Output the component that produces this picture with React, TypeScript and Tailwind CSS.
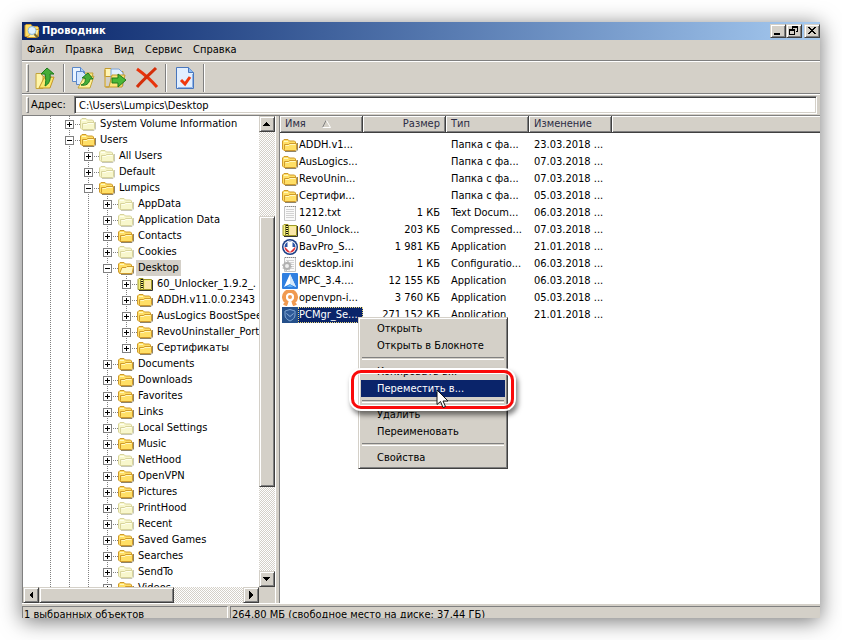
import { useState } from 'react';
import type { ReactNode } from 'react';

type TreeItem = {
  name: string;
  level: number;
  kind?: 'folder' | 'faded' | 'open' | 'zip';
  expanded?: boolean;
};

const tree: TreeItem[] = [
  { name: 'System Volume Information', level: 1, kind: 'faded' },
  { name: 'Users', level: 1, expanded: true },
  { name: 'All Users', level: 2, kind: 'faded' },
  { name: 'Default', level: 2, kind: 'faded' },
  { name: 'Lumpics', level: 2, expanded: true },
  { name: 'AppData', level: 3, kind: 'faded' },
  { name: 'Application Data', level: 3, kind: 'faded' },
  { name: 'Contacts', level: 3 },
  { name: 'Cookies', level: 3, kind: 'faded' },
  { name: 'Desktop', level: 3, kind: 'open', expanded: true },
  { name: '60_Unlocker_1.9.2_.', level: 4, kind: 'zip' },
  { name: 'ADDH.v11.0.0.2343', level: 4 },
  { name: 'AusLogics BoostSpee', level: 4 },
  { name: 'RevoUninstaller_Port', level: 4 },
  { name: 'Сертификаты', level: 4 },
  { name: 'Documents', level: 3 },
  { name: 'Downloads', level: 3 },
  { name: 'Favorites', level: 3 },
  { name: 'Links', level: 3 },
  { name: 'Local Settings', level: 3, kind: 'faded' },
  { name: 'Music', level: 3 },
  { name: 'NetHood', level: 3, kind: 'faded' },
  { name: 'OpenVPN', level: 3 },
  { name: 'Pictures', level: 3 },
  { name: 'PrintHood', level: 3, kind: 'faded' },
  { name: 'Recent', level: 3, kind: 'faded' },
  { name: 'Saved Games', level: 3 },
  { name: 'Searches', level: 3 },
  { name: 'SendTo', level: 3, kind: 'faded' },
  { name: 'Videos', level: 3 },
];

const files = [
  { icon: 'folder', name: 'ADDH.v1...', size: '', type: 'Папка с фа...', date: '23.03.2018 ...' },
  { icon: 'folder', name: 'AusLogics...', size: '', type: 'Папка с фа...', date: '07.03.2018 ...' },
  { icon: 'folder', name: 'RevoUnin...', size: '', type: 'Папка с фа...', date: '07.03.2018 ...' },
  { icon: 'folder', name: 'Сертифи...', size: '', type: 'Папка с фа...', date: '05.03.2018 ...' },
  { icon: 'txt', name: '1212.txt', size: '1 КБ', type: 'Text Docum...', date: '06.03.2018 ...' },
  { icon: 'zip', name: '60_Unlock...', size: '203 КБ', type: 'Compressed...', date: '07.03.2018 ...' },
  { icon: 'bav', name: 'BavPro_S...', size: '1 981 КБ', type: 'Application', date: '21.01.2018 ...' },
  { icon: 'ini', name: 'desktop.ini', size: '1 КБ', type: 'Configuratio...', date: '06.03.2018 ...' },
  { icon: 'mpc', name: 'MPC_3.4....', size: '12 155 КБ', type: 'Application', date: '06.03.2018 ...' },
  { icon: 'vpn', name: 'openvpn-i...', size: '3 760 КБ', type: 'Application', date: '05.03.2018 ...' },
  { icon: 'pcm', name: 'PCMgr_Se...', size: '271 152 КБ', type: 'Application', date: '21.01.2018 ...' },
];

const FolderIcon = ({ faded = false, open = false }: { faded?: boolean; open?: boolean }) => {
  const line = faded ? '#d8d49c' : '#cf9a2c';
  const body = faded ? '#f8f7cc' : '#ffdf66';
  const light = faded ? '#fffff0' : '#fff8c0';
  return (
    <svg width="16" height="16" viewBox="0 0 16 16" className="shrink-0">
      <path d="M3 14.500h11l1.500-1.500V6" fill="none" stroke={faded ? '#c8c8b8' : '#8f8468'} />
      <path d="M.500 12V4l1.500-1.500h4L7.500 4h5l1 1v7L12 13.500H2z" fill={body} stroke={line} />
      <path d="M2 4.500h4" stroke={light} />
      {open ? (
        <path d="M1.500 13.500 4 7.500h4l1-1h6.500l-1.500 7z" fill={light} stroke={line} />
      ) : (
        <>
          <path d="M2.500 7.500h4l1-1h7v6l-1 1h-10l-1-1z" fill={body} stroke={line} />
          <path d="M3.500 8.500H7l1-1h5.500" fill="none" stroke={light} />
        </>
      )}
    </svg>
  );
};

const SearchFolderIcon = () => (
  <svg width="16" height="16" viewBox="0 0 16 16" className="shrink-0">
    <path d="M1 13.500v-11l1-1h5l1.500 2h5l1 1v9z" fill="#ffdf66" stroke="#cf9a2c" />
    <path d="M11 6.500h4l-2 8H3z" fill="#fff0a0" stroke="#cf9a2c" />
    <circle cx="8" cy="7.500" r="4" fill="#dff1ff" stroke="#8db8da" />
    <path d="m10.500 11 3 3.500" stroke="#7a6a30" strokeWidth="2" />
  </svg>
);

const ZipIcon = () => (
  <svg width="16" height="16" viewBox="0 0 16 16" className="shrink-0">
    <path d="M1 13.500V3.500l1-1h4l1 1h7.500v10z" fill="#f5f084" stroke="#a09828" />
    <path d="M8 5h6v8H8z" fill="#fbe7a8" />
    <path d="M2 14.500h13.500V4" fill="none" stroke="#333" />
    <path d="M3.500 3v10M6.500 3v10" stroke="#8c8630" />
    <path d="M5 3v10" stroke="#111" strokeWidth="2" strokeDasharray="1 1" />
  </svg>
);

const FileIcon = ({ icon }: { icon: string }) => {
  if (icon === 'folder') return <FolderIcon />;
  if (icon === 'zip') return <ZipIcon />;
  return (
    <svg width="16" height="16" viewBox="0 0 16 16" className="shrink-0">
      {(icon === 'txt' || icon === 'ini') && (
        <>
          <path d="M2.500 1.500h11v14h-11z" fill="#fafafa" stroke="#c4c4c4" />
          <path d="M3 1.500h11" stroke="#888" strokeDasharray="1 1" />
          <path d="M4 4.500h8M4 6.500h8M4 8.500h8M4 10.500h8M4 12.500h8" stroke="#d2d2d2" />
        </>
      )}
      {icon === 'ini' && (
        <>
          <circle cx="5" cy="10" r="3" fill="#eee" stroke="#b0b0b0" strokeWidth="2" />
          <circle cx="5" cy="10" r="4.500" fill="none" stroke="#b0b0b0" strokeDasharray="1.500 2" />
        </>
      )}
      {icon === 'bav' && (
        <>
          <circle cx="8" cy="8" r="8" fill="#1c3f86" />
          <circle cx="8" cy="8" r="6.500" fill="#fff" />
          <path d="M8 2.500a5.500 5.500 0 0 0-5.500 5.500h11A5.500 5.500 0 0 0 8 2.500z" fill="#2a55a5" />
          <path d="M2.500 8a5.500 5.500 0 0 0 11 0z" fill="#dd3038" />
          <path d="M5.500 3h5v5H13l-5 5-5-5h2.500z" fill="#fff" />
        </>
      )}
      {icon === 'mpc' && (
        <>
          <rect width="16" height="16" rx="1" fill="#2f7fe0" />
          <path d="M8 1 2 14l6-3 6 3z" fill="#fff" />
          <path d="M8 1v10l6 3z" fill="#d3e8fc" />
          <path d="m8 11-3 3h6z" fill="#5fb0f5" />
        </>
      )}
      {icon === 'vpn' && (
        <>
          <path d="M3 15.500 4.500 12a6 6 0 1 1 7 0l1.500 3.500" fill="none" stroke="#f09a50" strokeWidth="4" />
          <circle cx="8" cy="7" r="3" fill="#f09a50" stroke="#fff" strokeWidth="2" />
          <path d="M7 9h2l1 7H6z" fill="#fff" />
        </>
      )}
      {icon === 'pcm' && (
        <>
          <rect width="16" height="16" fill="#25508a" />
          <path d="M8 2.500 13 4v4c0 3-2 4.500-5 6-3-1.500-5-3-5-6V4z" fill="#2e5a98" stroke="#7fa4d2" />
          <path d="m4.500 6.500 3.500 3 3.500-3" fill="none" stroke="#8fb1dc" />
        </>
      )}
    </svg>
  );
};

const bevel =
  'border border-t-[#d4d0c8] border-l-[#d4d0c8] border-r-[#404040] border-b-[#404040] bg-[#d4d0c8] shadow-[inset_1px_1px_#fff,inset_-1px_-1px_#808080]';
const checker = 'bg-[repeating-conic-gradient(#fff_0_25%,#d4d0c8_0_50%)] bg-[length:2px_2px]';

const CaptionButton = ({ label, children }: { label: string; children: ReactNode }) => (
  <button aria-label={label} className={`flex h-[14px] w-4 items-center justify-center ${bevel}`}>
    <svg width="10" height="10" viewBox="0 0 10 10" shapeRendering="crispEdges">
      {children}
    </svg>
  </button>
);

const ScrollButton = ({ label, d }: { label: string; d: string }) => (
  <button aria-label={label} className={`flex size-4 shrink-0 items-center justify-center ${bevel}`}>
    <svg width="8" height="8" viewBox="0 0 8 8" shapeRendering="crispEdges">
      <path d={d} />
    </svg>
  </button>
);

const ToolButton = ({ label, children }: { label: string; children: ReactNode }) => (
  <button aria-label={label} className="flex h-7 w-8 items-center justify-center">
    <svg width="24" height="24" viewBox="0 0 24 24" className="shrink-0">
      {children}
    </svg>
  </button>
);

const ToolSeparator = () => <div className="mx-[2px] h-7 w-[2px] border-l border-r border-l-[#808080] border-r-white" />;

const Gripper = ({ tall = false }: { tall?: boolean }) => (
  <div className={`w-[3px] border border-t-white border-l-white border-r-[#808080] border-b-[#808080] ${tall ? 'h-7' : 'h-4'}`} />
);

const Toolbar = () => (
  <div className="flex h-8 items-center border-b border-[#808080] pl-1">
    <Gripper tall />
    <ToolButton label="Вверх">
      <path d="M4 9h5l2 2h8l-2 10H5z" fill="#f2cf5b" stroke="#c4962a" />
      <path d="M3 7.500h5l2 3v12H3z" fill="#fff5a8" stroke="#c4a43a" />
      <path d="m11 12 10-1-4 11H6z" fill="#fbe76d" stroke="#c4962a" />
      <path d="M8 8 14 2l7 6h-4c1 6-1 10-5 12 1-4 1-7 0-12z" fill="#45ad38" stroke="#1f7a1c" />
    </ToolButton>
    <ToolSeparator />
    <ToolButton label="Копировать в">
      <path d="M13 7h9l-3 13H9z" fill="#f9e37a" stroke="#c4a43a" />
      <path d="M1.500 1.500h8l4 4v10h-12z" fill="#eaf4ff" stroke="#5a87c8" />
      <path d="M9.500 1.500v4h4" fill="#a9cdf5" stroke="#5a87c8" />
      <path d="M5.500 5.500h6l4 4v9h-10z" fill="#d3e7ff" stroke="#5a87c8" />
      <path d="m12 13 11-3-4 12H7z" fill="#fff39a" stroke="#c4a43a" />
      <path d="m11 12 6-5 5 6h-3c-1 5-4 7-9 6 3-1 5-3 4-7z" fill="#45ad38" stroke="#1f7a1c" />
    </ToolButton>
    <ToolButton label="Переместить в">
      <path d="M2 2.500h6l2 3h10v5H2z" fill="#fff5b5" stroke="#c49a2c" />
      <path d="M8 3h8l4 4v13H8z" fill="#e1efff" stroke="#7ea3d3" />
      <path d="M2 4v17h4l3-12h13l-3 12H3" fill="#fbe57b" stroke="#c49a2c" />
      <path d="M9 12h6V8l8 6-8 7v-4H9z" fill="#49b837" stroke="#1f7a1c" />
    </ToolButton>
    <ToolButton label="Удалить">
      <path d="M2 3c7 5 14 11 20 18" fill="none" stroke="#e8340c" strokeWidth="3" />
      <path d="M21 2C15 8 8 14 2 21" fill="none" stroke="#d42f0a" strokeWidth="3" />
    </ToolButton>
    <ToolSeparator />
    <ToolButton label="Свойства">
      <path d="M3.500 1.500h12l5 5v16h-17z" fill="#e2efff" stroke="#4876bd" />
      <path d="M15.500 1.500v5h5" fill="#8ebcf2" stroke="#4876bd" />
      <path d="M5 21.500h14.500V8" fill="none" stroke="#8fb4e8" />
      <path d="m8 14 4 4 5-7" fill="none" stroke="#f0380e" strokeWidth="3" />
    </ToolButton>
    <ToolSeparator />
  </div>
);

const TreeRow = ({ item, lastChild }: { item: TreeItem; lastChild: boolean }) => {
  const [expanded, setExpanded] = useState(!!item.expanded);
  return (
    <li className="flex h-4 items-center whitespace-nowrap">
      {Array.from({ length: item.level }, (_, i) => (
        <span key={i} className="flex h-4 w-[19px] shrink-0 justify-center">
          <span className="h-4 w-px bg-[repeating-linear-gradient(#808080_0_1px,#fff_1px_2px)]" />
        </span>
      ))}
      <span className="relative flex h-4 w-[20px] shrink-0 items-center pl-[5px]">
        <span
          className={`absolute top-0 left-[9px] w-px bg-[repeating-linear-gradient(#808080_0_1px,#fff_1px_2px)] ${lastChild ? 'h-2' : 'h-4'}`}
        />
        <button
          aria-label={item.name}
          aria-expanded={expanded}
          onClick={() => setExpanded(!expanded)}
          className="relative size-[9px] border border-[#808080] bg-white"
        >
          <svg width="7" height="7" viewBox="0 0 7 7" stroke="#000" className="block" shapeRendering="crispEdges">
            <path d={expanded ? 'M1 3.500h5' : 'M1 3.500h5M3.500 1v5'} />
          </svg>
        </button>
        <span className="h-px w-[6px] bg-[repeating-linear-gradient(90deg,#fff_0_1px,#808080_1px_2px)]" />
      </span>
      {item.kind === 'zip' ? <ZipIcon /> : <FolderIcon faded={item.kind === 'faded'} open={item.kind === 'open'} />}
      <span className={`ml-[2px] h-4 px-[2px] leading-4 ${item.kind === 'open' ? 'bg-[#d4d0c8]' : ''}`}>{item.name}</span>
    </li>
  );
};

const TreePane = () => (
  <aside className="flex w-[253px] shrink-0 flex-col border-l border-[#808080] bg-white">
    <div className="flex min-h-0 flex-1">
      <ul className="min-w-0 flex-1 overflow-hidden pl-[18px]">
        {tree.map((item) => (
          <TreeRow key={item.name} item={item} lastChild={item.name === 'Сертификаты'} />
        ))}
      </ul>
      <div className={`flex w-4 flex-col ${checker}`}>
        <ScrollButton label="Вверх" d="M0 6h7L3.500 2z" />
        <div className="flex-[84]" />
        <div className={`flex-[271] ${bevel}`} />
        <div className="flex-[84]" />
        <ScrollButton label="Вниз" d="M0 2h7L3.500 6z" />
      </div>
    </div>
    <div className="flex h-4 bg-[#d4d0c8] pr-4">
      <div className={`flex flex-1 ${checker}`}>
        <ScrollButton label="Влево" d="M6 0v8L2 4z" />
        <div className={`flex-[134] ${bevel}`} />
        <div className="flex-[70]" />
        <ScrollButton label="Вправо" d="M2 0v8l4-4z" />
      </div>
    </div>
  </aside>
);

const th =
  'h-[17px] border-r border-b border-[#404040] bg-[#d4d0c8] px-[5px] font-normal text-[#2c2c44] shadow-[inset_1px_1px_#fff,inset_-1px_-1px_#808080]';

const FileTable = () => (
  <table className="w-full table-fixed border-separate border-spacing-0 text-left whitespace-nowrap">
    <colgroup>
      <col className="w-[83px]" />
      <col className="w-[83px]" />
      <col className="w-[83px]" />
      <col className="w-[83px]" />
      <col />
    </colgroup>
    <thead>
      <tr>
        <th className={th}>
          <span className="flex items-center gap-4">
            Имя
            <svg width="9" height="8" viewBox="0 0 9 8" fill="none">
              <path d="M4 .500.500 7.500" stroke="#808080" />
              <path d="M4.500.500 8.500 7.500H.500" stroke="#fff" />
            </svg>
          </span>
        </th>
        <th className={`${th} text-right`}>Размер</th>
        <th className={th}>Тип</th>
        <th className={th}>Изменение</th>
        <th
          aria-label="Пусто"
          className="h-[17px] border-b border-[#404040] bg-[#d4d0c8] shadow-[inset_1px_1px_#fff,inset_0_-1px_#808080]"
        />
      </tr>
      <tr aria-hidden="true" className="h-[3px]" />
    </thead>
    <tbody>
      {files.map((file) => (
        <tr key={file.name} className="h-[17px]">
          <td className="p-0">
            <span className="flex h-[17px] items-center pl-[2px]">
              <FileIcon icon={file.icon} />
              {file.icon === 'pcm' ? (
                <span className="h-4 flex-1 border border-dotted border-[#e8d87c] bg-[#0a246a] leading-[14px] text-white">
                  {file.name}
                </span>
              ) : (
                <span className="pl-px">{file.name}</span>
              )}
            </span>
          </td>
          <td className="px-[6px] py-0 text-right">{file.size}</td>
          <td className="px-[5px] py-0">{file.type}</td>
          <td className="px-[5px] py-0">{file.date}</td>
          <td />
        </tr>
      ))}
    </tbody>
  </table>
);

const MenuItem = ({ children, active = false }: { children: ReactNode; active?: boolean }) => (
  <button
    role="menuitem"
    className={`block h-[17px] w-full pl-4 text-left leading-[17px] ${active ? 'bg-[#0a246a] text-white' : ''}`}
  >
    {children}
  </button>
);

const MenuSeparator = () => <div className="mx-px my-[3px] h-[3px] border-t border-b border-t-[#808080] border-b-white" />;

const ContextMenu = () => (
  <div role="menu" className={`absolute top-[201px] left-[78px] w-[150px] p-[2px] ${bevel}`}>
    <MenuItem>Открыть</MenuItem>
    <MenuItem>Открыть в Блокноте</MenuItem>
    <MenuSeparator />
    <MenuItem>Копировать в...</MenuItem>
    <MenuItem active>Переместить в...</MenuItem>
    <MenuSeparator />
    <MenuItem>Удалить</MenuItem>
    <MenuItem>Переименовать</MenuItem>
    <MenuSeparator />
    <MenuItem>Свойства</MenuItem>
    <div className="pointer-events-none absolute top-[52px] -left-2 h-[39px] w-[163px] rounded-[10px] border-3 border-[#fa0a0a] shadow-[0_0_0_2px_#fff,inset_0_0_0_1px_#fff,2px_4px_5px_2px_rgba(0,0,0,0.5)]" />
    <svg width="13" height="20" viewBox="0 0 13 20" className="absolute top-[71px] left-[77px]">
      <path d="M1 1v14.500l3.500-3 2.500 6 2.500-1-2.500-5.500h5z" fill="#fff" stroke="#111" />
    </svg>
  </div>
);

export default function App() {
  return (
    <div className="h-screen bg-white p-[22px] font-['DejaVu_Sans_Condensed','DejaVu_Sans',sans-serif] text-[11px] leading-4 text-black">
      <div className="flex h-full flex-col bg-[#d4d0c8] shadow-[0_3px_20px_rgba(0,0,0,0.55)]">
        <header className="flex h-[18px] shrink-0 items-center bg-linear-to-r from-[#0a246a] to-[#a6caf0] pl-[2px] text-white">
          <SearchFolderIcon />
          <h1 className="flex-1 pl-[2px] font-bold">Проводник</h1>
          <div className="flex">
            <CaptionButton label="Свернуть">
              <path d="M1 7h6v2H1z" />
            </CaptionButton>
            <CaptionButton label="Восстановить">
              <path d="M3 0h6v6H7V5h1V2H4v1H3zM0 3h6v6H0zM1 5v3h4V5z" fillRule="evenodd" />
            </CaptionButton>
            <div className="w-[2px]" />
            <CaptionButton label="Закрыть">
              <path d="M1 1h2v1h1v1h2V2h1V1h2v1H8v1H7v1H6v1h1v1h1v1h1v1H7V7H6V6H4v1H3v1H1V7h1V6h1V5h1V4H3V3H2V2H1z" />
            </CaptionButton>
          </div>
        </header>

        <nav className="flex h-[21px] shrink-0 items-center gap-[11px] border-b border-[#808080] pl-[5px]">
          <button>Файл</button>
          <button>Правка</button>
          <button>Вид</button>
          <button>Сервис</button>
          <button>Справка</button>
        </nav>

        <div className="border-t border-white">
          <Toolbar />
        </div>

        <div className="flex h-[21px] shrink-0 items-center border-t border-white pr-[3px] pl-1">
          <Gripper />
          <label htmlFor="address" className="w-[45px] pl-[2px]">
            Адрес:
          </label>
          <input
            id="address"
            defaultValue="C:\Users\Lumpics\Desktop"
            className="h-[18px] flex-1 border border-t-[#808080] border-l-[#808080] border-r-white border-b-white bg-white pl-1 shadow-[inset_1px_1px_#404040,inset_-1px_-1px_#d4d0c8]"
          />
        </div>

        <main className="flex min-h-0 flex-1 border-t border-[#808080]">
          <TreePane />
          <div className="w-1 shrink-0 border-l border-white" />
          <section className="relative min-w-0 flex-1 border-l border-[#808080] bg-white">
            <FileTable />
            <ContextMenu />
          </section>
        </main>

        <footer className="flex h-[15px] shrink-0 gap-[2px] overflow-hidden border-t border-white pt-[2px]">
          <div className="w-[206px] border-t border-r border-l border-t-[#808080] border-r-white border-l-[#808080] pl-px">
            1 выбранных объектов
          </div>
          <div className="flex-1 border-t border-l border-[#808080] pl-px">264.80 МБ (свободное место на диске: 37.44 ГБ)</div>
        </footer>
      </div>
    </div>
  );
}
